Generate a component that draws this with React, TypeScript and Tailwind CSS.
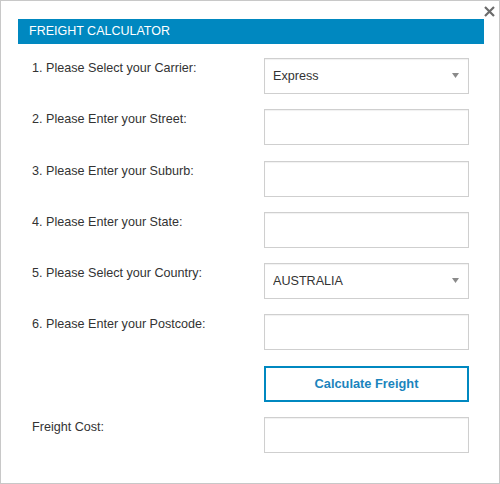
import React, { useState } from 'react';

type Field = {
  label: string;
  kind: 'select' | 'input';
  options?: string[];
};

const fields: Field[] = [
  { label: '1. Please Select your Carrier:', kind: 'select', options: ['Express', 'Standard'] },
  { label: '2. Please Enter your Street:', kind: 'input' },
  { label: '3. Please Enter your Suburb:', kind: 'input' },
  { label: '4. Please Enter your State:', kind: 'input' },
  { label: '5. Please Select your Country:', kind: 'select', options: ['AUSTRALIA', 'NEW ZEALAND'] },
  { label: '6. Please Enter your Postcode:', kind: 'input' },
];

const boxClass =
  'w-[205px] h-[36px] border border-[#cfcfcf] bg-white shadow-[inset_0_1px_1px_rgba(0,0,0,0.06)] text-[12.6px] text-[#333] px-[8px] outline-none';

function SelectBox({ options }: { options: string[] }) {
  const [value, setValue] = useState(options[0]);
  return (
    <div className="relative">
      <select
        value={value}
        onChange={(e) => setValue(e.target.value)}
        className={`${boxClass} appearance-none`}
      >
        {options.map((o) => (
          <option key={o}>{o}</option>
        ))}
      </select>
      {/* dropdown arrow */}
      <svg
        className="absolute right-[10px] top-[15px] pointer-events-none"
        width="7"
        height="5"
        viewBox="0 0 7 5"
      >
        <path d="M0 0 H7 L3.5 5 Z" fill="#8a8a8a" />
      </svg>
    </div>
  );
}

export default function App() {
  return (
    <div className="relative w-[500px] h-[484px] border border-[#c8c8c8] bg-white font-['Liberation_Sans',Arial,sans-serif]">
      {/* close */}
      <button className="absolute top-[4px] right-[4px] w-[12px] h-[12px] flex items-center justify-center">
        <svg width="11" height="11" viewBox="0 0 11 11">
          <path d="M1 1 L10 10 M10 1 L1 10" stroke="#6b6b6b" strokeWidth="2.2" />
        </svg>
      </button>

      {/* header */}
      <div className="mt-[18px] ml-[17px] mr-[15px] h-[25px] bg-[#0088c0] text-white text-[12.5px] leading-[25px] pl-[11px]">
        FREIGHT CALCULATOR
      </div>

      <div className="mt-[14px] pl-[31px] flex flex-col gap-[15.3px]">
        {fields.map((f) => (
          <div key={f.label} className="flex">
            <div className="w-[232px] pt-[2px] leading-[16px] text-[12.6px] text-[#333]">{f.label}</div>
            {f.kind === 'select' ? <SelectBox options={f.options!} /> : <input className={boxClass} />}
          </div>
        ))}

        <div className="flex">
          <div className="w-[232px]" />
          <button className="w-[205px] h-[36px] border-2 border-[#0088c0] bg-white text-[12.8px] font-bold text-[#1a84bd]">
            Calculate Freight
          </button>
        </div>

        <div className="flex">
          <div className="w-[232px] pt-[2px] leading-[16px] text-[12.6px] text-[#333]">Freight Cost:</div>
          <input className={boxClass} readOnly />
        </div>
      </div>
    </div>
  );
}
